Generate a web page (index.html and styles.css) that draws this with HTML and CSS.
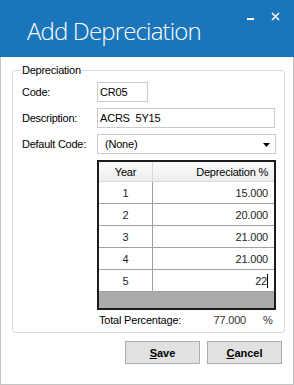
FILE: index.html
```html
<!DOCTYPE html>
<html lang="en">
<head>
    <meta charset="UTF-8">
    <title>Add Depreciation</title>
    <link rel="stylesheet" href="styles.css">
</head>
<body>
    <div class="window">
        <div class="titlebar">
            <h1>Add Depreciation</h1>
            <div class="controls">
                <svg class="min" width="8" height="8" viewBox="0 0 8 8"><rect x="0" y="6" width="7" height="2" fill="#fff"/></svg>
                <svg class="close" width="9" height="9" viewBox="0 0 9 9"><path d="M1 1 L8 8 M8 1 L1 8" stroke="#fff" stroke-width="1.6"/></svg>
            </div>
        </div>

        <fieldset class="group">
            <legend>Depreciation</legend>
            <div class="field">
                <label>Code:</label>
                <div class="box code">CR05</div>
            </div>
            <div class="field">
                <label>Description:</label>
                <div class="box desc">ACRS&nbsp; 5Y15</div>
            </div>
            <div class="field">
                <label>Default Code:</label>
                <div class="box select">
                    <span>(None)</span>
                    <svg width="7" height="4" viewBox="0 0 7 4"><path d="M0 0 H7 L3.5 4 Z" fill="#000"/></svg>
                </div>
            </div>

            <div class="grid">
                <div class="grid-row head">
                    <div class="cell year">Year</div>
                    <div class="cell pct">Depreciation %</div>
                </div>
                <div class="grid-row">
                    <div class="cell year">1</div>
                    <div class="cell pct">15.000</div>
                </div>
                <div class="grid-row">
                    <div class="cell year">2</div>
                    <div class="cell pct">20.000</div>
                </div>
                <div class="grid-row">
                    <div class="cell year">3</div>
                    <div class="cell pct">21.000</div>
                </div>
                <div class="grid-row">
                    <div class="cell year">4</div>
                    <div class="cell pct">21.000</div>
                </div>
                <div class="grid-row">
                    <div class="cell year">5</div>
                    <div class="cell pct editing">22<span class="caret"></span></div>
                </div>
                <div class="grid-empty"></div>
            </div>

            <div class="total">
                <span class="total-label">Total Percentage:</span>
                <span class="total-value">77.000</span>
                <span class="total-unit">%</span>
            </div>
        </fieldset>

        <div class="buttons">
            <button class="btn"><u>S</u>ave</button>
            <button class="btn"><u>C</u>ancel</button>
        </div>
    </div>
</body>
</html>
```

FILE: styles.css
```css
body {
    margin: 0;
    font-family: "Liberation Sans", Arial, sans-serif;
    font-size: 11px;
    color: #000;
    background: #fff;
}
.window {
    width: 294px;
    height: 385px;
    box-sizing: border-box;
    border: 1px solid #c4c4c4;
    border-top: none;
    background: #fff;
}
.titlebar {
    height: 57px;
    margin: 0 -1px;
    background: #1b75bb;
    display: flex;
    align-items: flex-start;
    padding-left: 27px;
}
.titlebar h1 {
    margin: 16px 0 0;
    font-family: "Open Sans", sans-serif;
    font-weight: 300;
    font-size: 24px;
    line-height: 30px;
    color: #fff;
    letter-spacing: -0.85px;
}
.controls {
    margin-left: auto;
    display: flex;
    gap: 16px;
    padding: 12px 14px 0 0;
}
.group {
    margin: 7px 0 0 11px;
    width: 270px;
    box-sizing: border-box;
    border: 1px solid #d3dbe0;
    border-radius: 3px;
    padding: 5px 8px 5px 8px;
}
.group legend {
    padding: 0 1px;
    line-height: 13px;
    letter-spacing: -0.25px;
}
.field {
    display: flex;
    align-items: center;
    height: 20px;
    margin-bottom: 6px;
}
.field label {
    width: 76px;
    padding-left: 1px;
    box-sizing: border-box;
    letter-spacing: -0.25px;
}
.box {
    height: 20px;
    box-sizing: border-box;
    border: 1px solid #cbcbcb;
    padding: 0 2px;
    line-height: 18px;
    letter-spacing: -0.2px;
}
.code {
    width: 51px;
}
.desc {
    width: 178px;
}
.select {
    width: 179px;
    display: flex;
    align-items: center;
    justify-content: space-between;
    padding: 0 5px 0 7px;
}
.select svg {
    margin-top: 1px;
}
.grid {
    width: 179px;
    margin-left: 76px;
    box-sizing: border-box;
    border: 2px solid #1c1c1c;
    color: #1e1e1e;
}
.grid-row {
    display: grid;
    grid-template-columns: 54px 1fr;
    height: 22px;
    border-bottom: 1px solid #a0a0a0;
    box-sizing: border-box;
    background: #fff;
}
.grid-row.head {
    height: 20px;
    border-bottom: 1px solid #d8d8d8;
    background: linear-gradient(#fdfdfd, #ececec);
    color: #000;
}
.cell {
    display: flex;
    align-items: center;
    letter-spacing: -0.2px;
}
.cell.year {
    justify-content: center;
    border-right: 1px solid #a0a0a0;
}
.head .cell.year {
    border-right-color: #d8d8d8;
}
.cell.pct {
    justify-content: flex-end;
    padding-right: 6px;
}
.caret {
    width: 1px;
    height: 14px;
    background: #000;
}
.grid-empty {
    height: 16px;
    background: #ababab;
}
.total {
    display: flex;
    margin: 4px 0 0 78px;
    line-height: 13px;
    letter-spacing: -0.2px;
}
.total-label {
    width: 110px;
}
.total-value {
    width: 37px;
    text-align: right;
    color: #333;
}
.total-unit {
    margin-left: 17px;
    color: #333;
}
.buttons {
    display: flex;
    justify-content: flex-end;
    gap: 7px;
    margin: 8px 11px 0 0;
}
.btn {
    width: 75px;
    height: 23px;
    background: #e1e1e1;
    border: 1px solid #adadad;
    border-radius: 0;
    font-family: "Liberation Sans", Arial, sans-serif;
    font-size: 11px;
    font-weight: bold;
    color: #000;
    padding: 0;
}
```
